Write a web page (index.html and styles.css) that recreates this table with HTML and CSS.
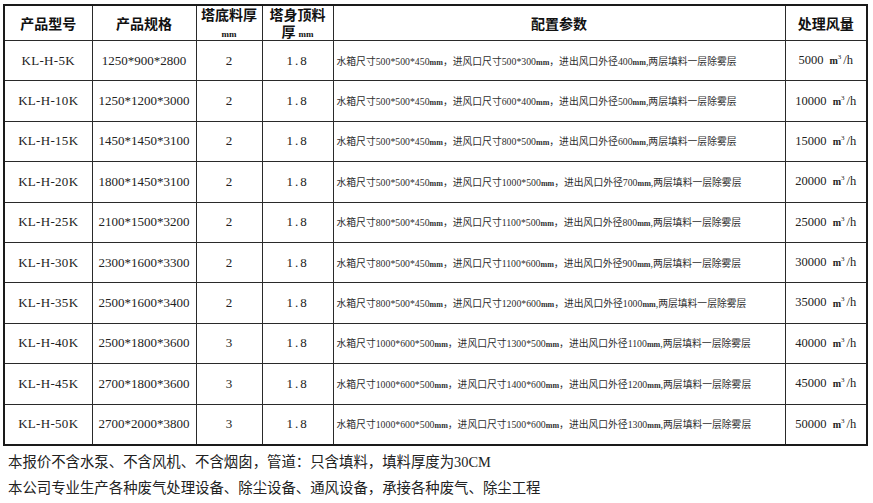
FILE: index.html
```html
<!DOCTYPE html>
<html lang="zh-CN">
<head>
<meta charset="utf-8">
<title>产品规格</title>
<link rel="stylesheet" href="styles.css">
</head>
<body>
<div class="page">
  <table class="spec">
    <colgroup>
      <col class="c-model">
      <col class="c-size">
      <col class="c-base">
      <col class="c-body">
      <col class="c-cfg">
      <col class="c-flow">
    </colgroup>
    <thead>
      <tr>
        <th>产品型号</th>
        <th>产品规格</th>
        <th class="two"><span class="l1">塔底料厚</span><span class="l2"><span class="mm">mm</span></span></th>
        <th class="two"><span class="l1">塔身顶料</span><span class="l2">厚 <span class="mm">mm</span></span></th>
        <th>配置参数</th>
        <th>处理风量</th>
      </tr>
    </thead>
    <tbody>
      <tr><td class="model">KL-H-5K</td><td>1250*900*2800</td><td>2</td><td class="thk">1.8</td><td class="cfg">水箱尺寸500*500*450<span class="u">mm</span>，进风口尺寸500*300<span class="u">mm</span>，进出风口外径400<span class="u">mm</span>,两层填料一层除雾层</td><td class="flow">5000 <span class="u">m</span><sup>3</sup>/h</td></tr>
      <tr><td class="model">KL-H-10K</td><td>1250*1200*3000</td><td>2</td><td class="thk">1.8</td><td class="cfg">水箱尺寸500*500*450<span class="u">mm</span>，进风口尺寸600*400<span class="u">mm</span>，进出风口外径500<span class="u">mm</span>,两层填料一层除雾层</td><td class="flow">10000 <span class="u">m</span><sup>3</sup>/h</td></tr>
      <tr><td class="model">KL-H-15K</td><td>1450*1450*3100</td><td>2</td><td class="thk">1.8</td><td class="cfg">水箱尺寸500*500*450<span class="u">mm</span>，进风口尺寸800*500<span class="u">mm</span>，进出风口外径600<span class="u">mm</span>,两层填料一层除雾层</td><td class="flow">15000 <span class="u">m</span><sup>3</sup>/h</td></tr>
      <tr><td class="model">KL-H-20K</td><td>1800*1450*3100</td><td>2</td><td class="thk">1.8</td><td class="cfg">水箱尺寸500*500*450<span class="u">mm</span>，进风口尺寸1000*500<span class="u">mm</span>，进出风口外径700<span class="u">mm</span>,两层填料一层除雾层</td><td class="flow">20000 <span class="u">m</span><sup>3</sup>/h</td></tr>
      <tr><td class="model">KL-H-25K</td><td>2100*1500*3200</td><td>2</td><td class="thk">1.8</td><td class="cfg">水箱尺寸800*500*450<span class="u">mm</span>，进风口尺寸1100*500<span class="u">mm</span>，进出风口外径800<span class="u">mm</span>,两层填料一层除雾层</td><td class="flow">25000 <span class="u">m</span><sup>3</sup>/h</td></tr>
      <tr><td class="model">KL-H-30K</td><td>2300*1600*3300</td><td>2</td><td class="thk">1.8</td><td class="cfg">水箱尺寸800*500*450<span class="u">mm</span>，进风口尺寸1100*600<span class="u">mm</span>，进出风口外径900<span class="u">mm</span>,两层填料一层除雾层</td><td class="flow">30000 <span class="u">m</span><sup>3</sup>/h</td></tr>
      <tr><td class="model">KL-H-35K</td><td>2500*1600*3400</td><td>2</td><td class="thk">1.8</td><td class="cfg">水箱尺寸800*500*450<span class="u">mm</span>，进风口尺寸1200*600<span class="u">mm</span>，进出风口外径1000<span class="u">mm</span>,两层填料一层除雾层</td><td class="flow">35000 <span class="u">m</span><sup>3</sup>/h</td></tr>
      <tr><td class="model">KL-H-40K</td><td>2500*1800*3600</td><td>3</td><td class="thk">1.8</td><td class="cfg">水箱尺寸1000*600*500<span class="u">mm</span>，进风口尺寸1300*500<span class="u">mm</span>，进出风口外径1100<span class="u">mm</span>,两层填料一层除雾层</td><td class="flow">40000 <span class="u">m</span><sup>3</sup>/h</td></tr>
      <tr><td class="model">KL-H-45K</td><td>2700*1800*3600</td><td>3</td><td class="thk">1.8</td><td class="cfg">水箱尺寸1000*600*500<span class="u">mm</span>，进风口尺寸1400*600<span class="u">mm</span>，进出风口外径1200<span class="u">mm</span>,两层填料一层除雾层</td><td class="flow">45000 <span class="u">m</span><sup>3</sup>/h</td></tr>
      <tr><td class="model">KL-H-50K</td><td>2700*2000*3800</td><td>3</td><td class="thk">1.8</td><td class="cfg">水箱尺寸1000*600*500<span class="u">mm</span>，进风口尺寸1500*600<span class="u">mm</span>，进出风口外径1300<span class="u">mm</span>,两层填料一层除雾层</td><td class="flow">50000 <span class="u">m</span><sup>3</sup>/h</td></tr>
    </tbody>
  </table>
  <div class="notes">
    <p>本报价不含水泵、不含风机、不含烟囱，管道：只含填料，填料厚度为30CM</p>
    <p>本公司专业生产各种废气处理设备、除尘设备、通风设备，承接各种废气、除尘工程</p>
  </div>
</div>
</body>
</html>
```

FILE: styles.css
```css
html, body {
  margin: 0;
  background: #ffffff;
}

body {
  font-family: "Liberation Serif", "Noto Sans CJK SC", serif;
  color: #222222;
}

.page {
  padding: 4px 0 0 3px;
}

.spec {
  border-collapse: collapse;
  table-layout: fixed;
  width: 863px;
  border: 2px solid #1a1a1a;
}

.c-model { width: 88px; }
.c-size  { width: 104px; }
.c-base  { width: 66px; }
.c-body  { width: 71px; }
.c-cfg   { width: 452px; }
.c-flow  { width: 82px; }

.spec th,
.spec td {
  border: 1px solid #2a2a2a;
  padding: 0;
  text-align: center;
  vertical-align: middle;
}

.spec th {
  height: 34px;
  font-family: "Noto Sans CJK SC", sans-serif;
  font-weight: 700;
  font-size: 14px;
  line-height: 17px;
  color: #111111;
}

.spec th.two {
  vertical-align: top;
}

.spec th .l1 {
  display: block;
  height: 17px;
  line-height: 17px;
}

.spec th .l2 {
  display: block;
  height: 17px;
  line-height: 17px;
}

.spec th .mm {
  font-family: "Liberation Serif", serif;
  font-size: 9px;
  font-weight: 700;
}

.spec td {
  height: 39.4px;
  font-size: 13px;
  color: #222222;
}

.spec td.model {
  letter-spacing: 0.3px;
}

.spec td.thk {
  letter-spacing: 2px;
}

.spec td.cfg {
  text-align: left;
  padding-left: 3px;
  font-size: 9.8px;
  color: #2e2e2e;
  white-space: nowrap;
}

.spec td.cfg .u {
  font-size: 8px;
  font-weight: 700;
}

.spec td.flow {
  font-size: 12.5px;
}

.spec td.flow .u {
  font-size: 10px;
  font-weight: 700;
  margin-left: 3px;
}

.spec td.flow sup {
  font-size: 7px;
  margin-right: 2px;
}

.notes {
  padding: 3px 0 0 5px;
}

.notes p {
  margin: 0;
  font-size: 14.4px;
  line-height: 26px;
  color: #222222;
}
```
